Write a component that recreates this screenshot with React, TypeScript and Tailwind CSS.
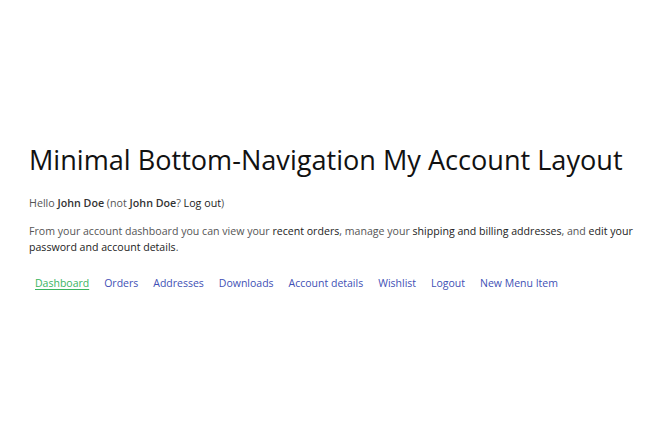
const navItems = ['Dashboard', 'Orders', 'Addresses', 'Downloads', 'Account details', 'Wishlist', 'Logout', 'New Menu Item'];

const App = () => {
  return (
    <div className="min-h-screen bg-white pl-[29px] pr-[20px] pt-[141px] font-['Open_Sans',sans-serif]">
      <h1 className="text-[27.1px] leading-[38px] whitespace-nowrap text-[#111]">Minimal Bottom-Navigation My Account Layout</h1>

      <p className="mt-[16px] text-[10.7px] leading-4 text-[#555]">
        Hello <strong className="font-semibold text-[#333]">John Doe</strong> (not{' '}
        <strong className="font-semibold text-[#333]">John Doe</strong>? <a className="text-[#222]">Log out</a>)
      </p>

      <p className="mt-[12px] text-[10.6px] leading-4 text-[#555]">
        From your account dashboard you can view your <a className="text-[#222]">recent orders</a>, manage your{' '}
        <a className="text-[#222]">shipping and billing addresses</a>, and <a className="text-[#222]">edit your password and account details</a>.
      </p>

      <nav className="mt-[20px] flex text-[10.5px] leading-4">
        {navItems.map((item, i) => (
          <a
            key={item}
            className={i === 0 ? 'px-[6px] mr-[3px] text-[#3bb55f] underline underline-offset-2' : 'px-[6px] mr-[3px] text-[#4150b5]'}
          >
            {item}
          </a>
        ))}
      </nav>
    </div>
  );
};

export default App;
